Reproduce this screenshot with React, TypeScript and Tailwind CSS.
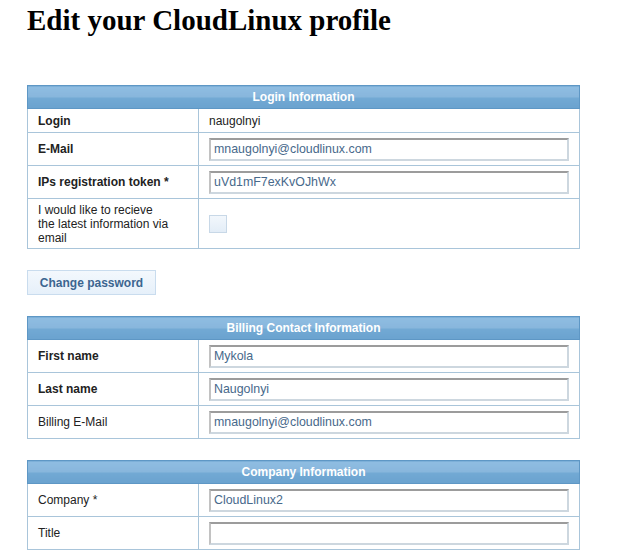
import React from 'react';

type Row = {
  label: string;
  bold?: boolean;
  value?: string;
  kind: 'text' | 'input' | 'checkbox';
};

const loginRows: Row[] = [
  { label: 'Login', bold: true, value: 'naugolnyi', kind: 'text' },
  { label: 'E-Mail', bold: true, value: 'mnaugolnyi@cloudlinux.com', kind: 'input' },
  { label: 'IPs registration token *', bold: true, value: 'uVd1mF7exKvOJhWx', kind: 'input' },
  { label: 'I would like to recieve the latest information via email', kind: 'checkbox' },
];

const billingRows: Row[] = [
  { label: 'First name', bold: true, value: 'Mykola', kind: 'input' },
  { label: 'Last name', bold: true, value: 'Naugolnyi', kind: 'input' },
  { label: 'Billing E-Mail', value: 'mnaugolnyi@cloudlinux.com', kind: 'input' },
];

const companyRows: Row[] = [
  { label: 'Company *', value: 'CloudLinux2', kind: 'input' },
  { label: 'Title', value: '', kind: 'input' },
];

const InfoTable = ({ title, rows }: { title: string; rows: Row[] }) => (
  <table className="w-[553px] table-fixed border-collapse text-[12px] text-[#222]">
    <colgroup>
      <col className="w-[171px]" />
      <col />
    </colgroup>
    <thead>
      <tr>
        <th
          colSpan={2}
          className="h-[23px] p-0 border border-[#5e97c5] bg-[linear-gradient(to_bottom,#8fbde2_0%,#88b6dc_48%,#72a9d4_52%,#6aa2cf_100%)] text-center text-[12px] font-bold text-white"
        >
          {title}
        </th>
      </tr>
    </thead>
    <tbody>
      {rows.map((row) => (
        <tr key={row.label}>
          <td
            className={`border border-[#a9c5da] pl-[10px] pr-[26px] leading-[14px] ${
              row.bold ? 'font-bold' : ''
            } ${row.kind === 'checkbox' ? 'h-[50px] py-[3px]' : row.kind === 'text' ? 'h-[24px]' : 'h-[33px]'}`}
          >
            {row.label}
          </td>
          <td className="border border-[#a9c5da] pl-[10px]">
            {row.kind === 'text' && <span>{row.value}</span>}
            {row.kind === 'input' && (
              <input
                readOnly
                value={row.value}
                className="block h-[23px] w-[360px] border-2 border-[#cdd7df] border-t-[#9c9c9c] border-l-[#c2c2c2] bg-white px-[3px] text-[12.4px] text-[#47698b] outline-none"
              />
            )}
            {row.kind === 'checkbox' && (
              <div className="h-[18px] w-[18px] border border-[#c8d8e7] bg-[linear-gradient(to_bottom,#f2f7fc,#e3edf7)]" />
            )}
          </td>
        </tr>
      ))}
    </tbody>
  </table>
);

export default function App() {
  return (
    <div className="min-h-[555px] bg-white pl-[27px] font-['Liberation_Sans',Arial,sans-serif]">
      <h1 className="pt-[3px] font-['Liberation_Serif','Times_New_Roman',serif] text-[29px] font-bold leading-[34px] text-black">
        Edit your CloudLinux profile
      </h1>
      <div className="mt-[48px]">
        <InfoTable title="Login Information" rows={loginRows} />
      </div>
      <button className="mt-[21px] block h-[25px] w-[129px] border border-[#c9dcee] bg-[linear-gradient(to_bottom,#f3f8fd,#e6f0fa)] text-[12px] font-bold text-[#3c6590]">
        Change password
      </button>
      <div className="mt-[21px]">
        <InfoTable title="Billing Contact Information" rows={billingRows} />
      </div>
      <div className="mt-[21px]">
        <InfoTable title="Company Information" rows={companyRows} />
      </div>
    </div>
  );
}
